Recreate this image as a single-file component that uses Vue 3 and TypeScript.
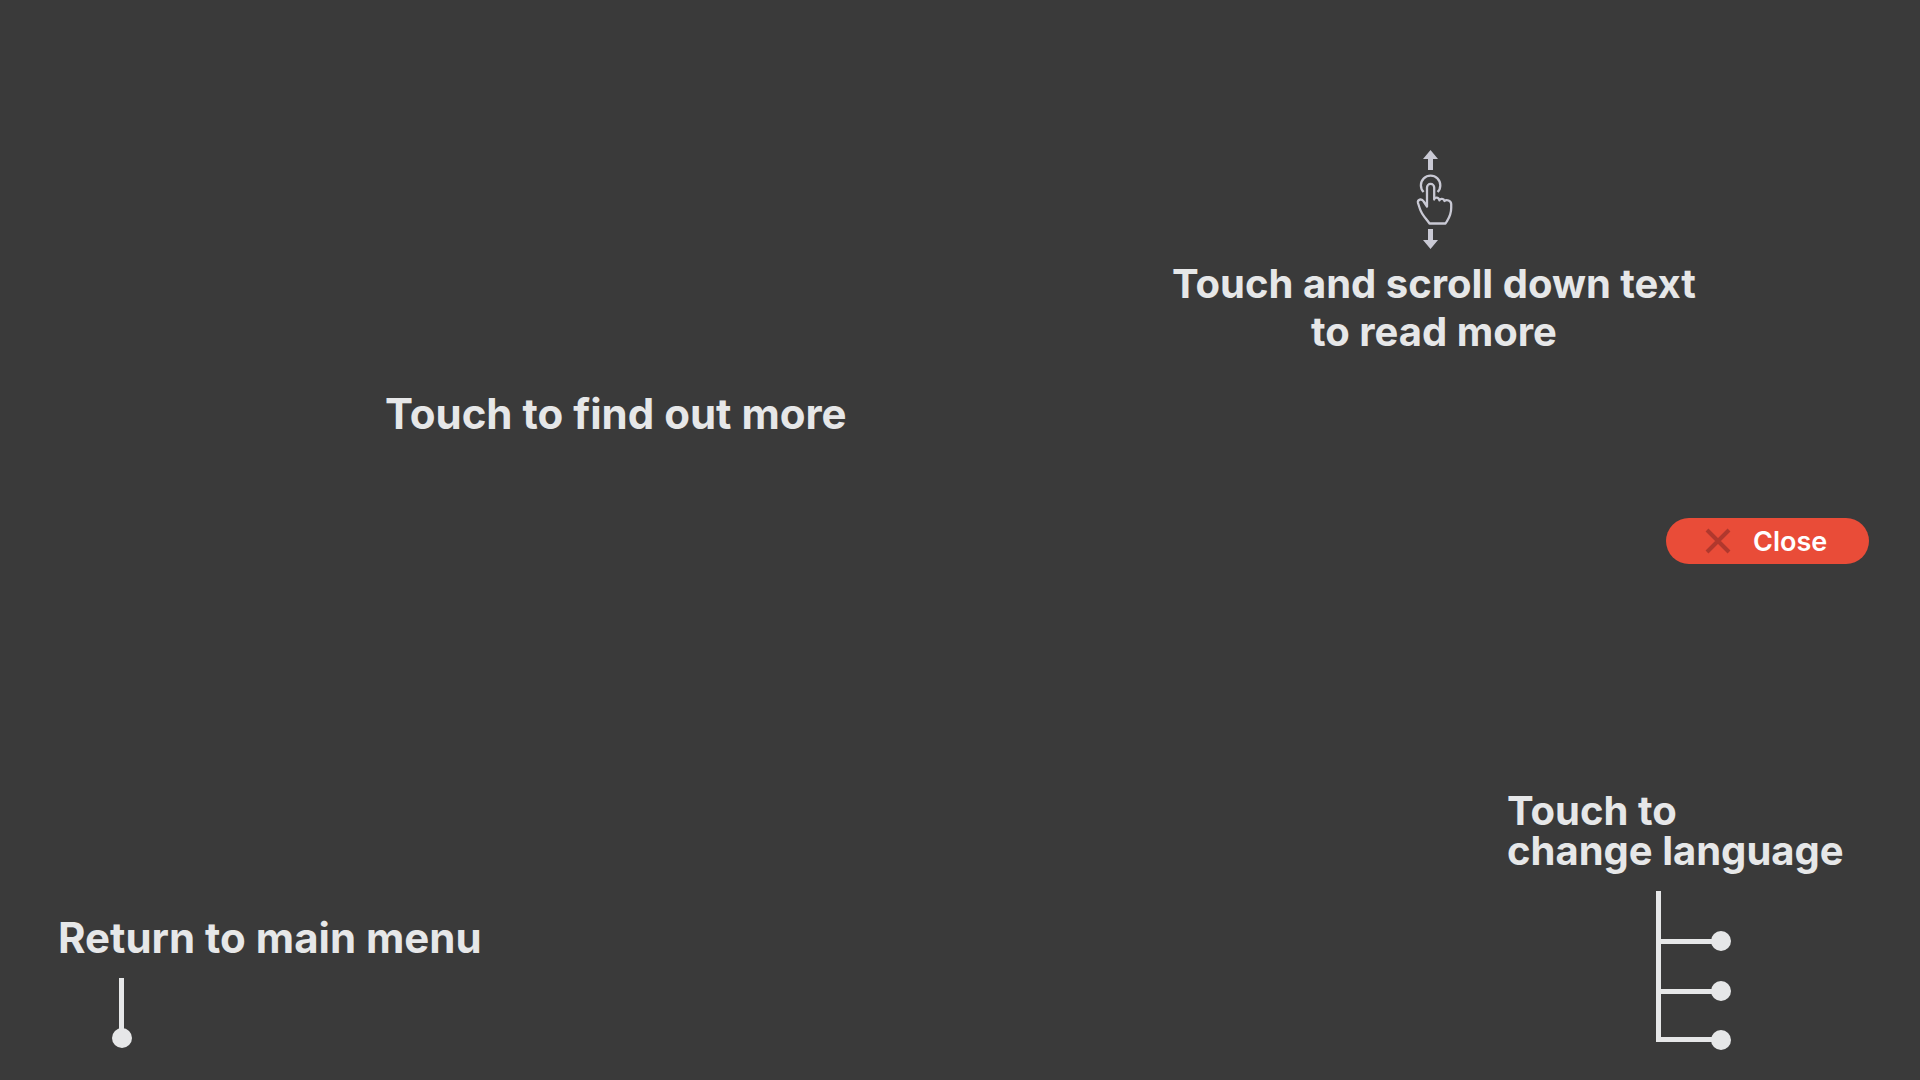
<script setup lang="ts">
interface Branch {
  id: string
  lineY: number
  dotY: number
}

const branches: Branch[] = [
  { id: 'first', lineY: 48, dotY: 50 },
  { id: 'second', lineY: 98, dotY: 100 },
  { id: 'third', lineY: 146, dotY: 149 },
]
</script>

<template>
  <main class="guide">
    <section class="column column-left">
      <p class="hint large find">Touch to find out more</p>
      <div class="return">
        <p class="hint large">Return to main menu</p>
        <svg class="pin" width="20" height="70" viewBox="0 0 20 70" aria-hidden="true">
          <rect x="7" y="0" width="5" height="56" />
          <circle cx="10" cy="60" r="10" />
        </svg>
      </div>
    </section>

    <section class="column column-right">
      <div class="scroll">
        <svg class="gesture" width="42" height="100" viewBox="23 10 42 100" aria-hidden="true">
          <path class="arrow" d="M40.5 10 48 19H43V30H38V19H33Z" />
          <path class="arrow" d="M38 89H43V100H48L40.5 109 33 100H38Z" />
          <path class="outline" d="M33.6 52A9.7 9.7 0 1 1 47.6 52" />
          <path
            class="outline"
            d="M37 66.500V47.500A3.600 3.600 0 0 1 44.200 47.500V59.500C44.200 57 48.700 56.600 49.400 60.300C50.200 58.300 53.700 58.300 54.500 61C56.500 59.200 61 60.500 61.200 64V68C61.200 76 58.500 78.500 55.500 83.500H39.500C36 78.500 31.500 74.500 29.800 68.500L28 63C27.200 59.500 31.500 58 33.700 61.500Z"
          />
        </svg>
        <p class="hint centered">Touch and scroll down text<br />to read more</p>
      </div>

      <button class="close" type="button">
        <svg width="26" height="26" viewBox="0 0 26 26" aria-hidden="true">
          <path d="M2 2 24 24M24 2 2 24" />
        </svg>
        <span>Close</span>
      </button>

      <div class="language">
        <p class="hint tight">Touch to<br />change language</p>
        <svg class="tree" width="75" height="159" viewBox="0 0 75 159" aria-hidden="true">
          <rect x="0" y="0" width="5" height="151" />
          <g v-for="branch in branches" :key="branch.id">
            <rect x="0" :y="branch.lineY" width="60" height="5" />
            <circle cx="65" :cy="branch.dotY" r="10" />
          </g>
        </svg>
      </div>
    </section>
  </main>
</template>

<style>
body {
  margin: 0;
  background: #3a3a3a;
}
</style>

<style scoped>
.guide {
  box-sizing: border-box;
  display: grid;
  grid-template-columns: 948fr 972fr;
  min-height: 100vh;
  background: #3a3a3a;
  color: #e6e7e8;
  font-family: Inter, "Liberation Sans", sans-serif;
}

.column {
  box-sizing: border-box;
  display: flex;
  flex-direction: column;
}

.column-left {
  padding: 390px 0 32px 58px;
}

.column-right {
  padding: 150px 0 30px;
}

.hint {
  margin: 0;
  font-size: 40px;
  font-weight: 700;
  line-height: 48px;
  white-space: nowrap;
}

.large {
  font-size: 42px;
}

.find {
  margin-left: 327px;
}

.return {
  margin-top: auto;
}

.pin,
.tree {
  display: block;
  fill: #e6e7e8;
}

.pin {
  margin: 16px 0 0 54px;
}

.scroll {
  display: flex;
  flex-direction: column;
  align-items: center;
}

.gesture {
  display: block;
}

.arrow {
  fill: #c9c9d4;
}

.outline {
  fill: none;
  stroke: #c9c9d4;
  stroke-width: 2.3;
  stroke-linejoin: round;
}

.centered {
  margin-top: 10px;
  text-align: center;
}

.close {
  display: flex;
  align-items: center;
  align-self: flex-end;
  gap: 22px;
  box-sizing: border-box;
  width: 203px;
  height: 46px;
  margin: 162px 51px 0 0;
  padding: 0 0 0 39px;
  border: 0;
  border-radius: 23px;
  background: #e94c38;
  color: #ffffff;
  font: 600 27px Inter, "Liberation Sans", sans-serif;
  cursor: pointer;
}

.close path {
  fill: none;
  stroke: #b0382d;
  stroke-width: 4;
}

.language {
  align-self: flex-end;
  width: 352px;
  margin: auto 61px 0 0;
}

.tight {
  line-height: 40px;
}

.tree {
  margin: 20px 0 0 149px;
}
</style>
